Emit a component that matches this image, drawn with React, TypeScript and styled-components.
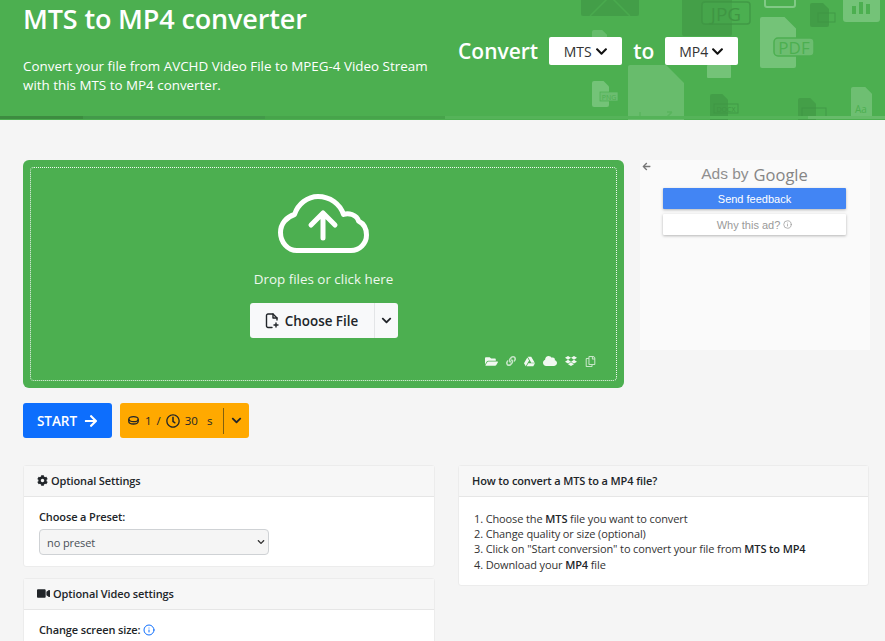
import React from "react";
import styled, { createGlobalStyle } from "styled-components";
import { FaArrowLeft, FaArrowRight, FaChevronDown, FaCloud, FaCog, FaDropbox, FaFolderOpen, FaGoogleDrive, FaLink, FaRegClock, FaRegCopy, FaVideo } from "react-icons/fa";
import { Info } from "lucide-react";

const Global = createGlobalStyle`
  html, body { margin: 0; padding: 0; height: 641px; overflow: hidden; background: #f5f5f5; }
  body { font-family: "Open Sans", "Noto Sans", sans-serif; color: #212529; }
  * { box-sizing: border-box; }
`;

const Page = styled.div`
  width: 885px;
  height: 641px;
  overflow: hidden;
`;

const Header = styled.header`
  position: relative;
  height: 120px;
  background: #4caf50;
  color: #fff;
  display: grid;
  grid-template-columns: 435px 1fr;
  padding-left: 23px;
  overflow: hidden;
`;

const Art = styled.svg`
  position: absolute;
  left: 0;
  top: 0;
  width: 885px;
  height: 120px;
`;

const Strip = styled.div`
  position: absolute;
  left: 0;
  right: 0;
  bottom: 1px;
  height: 3px;
  display: flex;
`;

const StripPart = styled.span<{ $w: number; $c: string }>`
  width: ${(p) => p.$w}px;
  background: ${(p) => p.$c};
`;

const Intro = styled.div`
  position: relative;
`;

const Title = styled.h1`
  margin: 0;
  font-size: 27px;
  letter-spacing: -0.15px;
  line-height: 37px;
  font-weight: 600;
`;

const Lead = styled.p`
  margin: 20px 0 0;
  font-size: 13.4px;
  line-height: 19px;
  width: 420px;
`;

const Convert = styled.div`
  position: relative;
  display: flex;
  align-items: center;
  height: 28px;
  margin-top: 37px;
  font-size: 21px;
  font-weight: 600;
`;

const ConvertWord = styled.span<{ $before?: number; $after: number }>`
  margin-left: ${(p) => p.$before ?? 0}px;
  margin-right: ${(p) => p.$after}px;
`;

const FormatButton = styled.div`
  width: 73px;
  height: 28px;
  background: #fff;
  border-radius: 2px;
  color: #333;
  display: flex;
  align-items: center;
  justify-content: center;
  gap: 3px;
  font-size: 14px;
  font-weight: 400;
  svg { color: #111; font-size: 13px; }
`;

const Main = styled.main`
  padding: 40px 15px 0 23px;
`;

const TopRow = styled.div`
  display: flex;
  align-items: flex-start;
  gap: 16px;
`;

const Uploader = styled.section`
  width: 601px;
  height: 228px;
  background: #4caf50;
  border-radius: 6px;
  padding: 7px;
`;

const DropZone = styled.div`
  position: relative;
  height: 100%;
  border: 1px dotted #f0f8f0;
  border-radius: 4px;
  display: flex;
  flex-direction: column;
  align-items: center;
  color: #fff;
  padding-top: 26px;
`;

const DropText = styled.div`
  margin-top: 15px;
  font-size: 13.4px;
  line-height: 20px;
  color: #eef8ee;
`;

const ChooseGroup = styled.div`
  margin-top: 14px;
  display: flex;
  height: 35px;
  width: 148px;
  background: #f8f9fa;
  border-radius: 3px;
  color: #212529;
`;

const ChooseMain = styled.div`
  flex: 1;
  display: flex;
  align-items: center;
  justify-content: center;
  gap: 6px;
  font-size: 13.4px;
  font-weight: 600;
  border-right: 1px solid #e3e5e7;
`;

const ChooseCaret = styled.div`
  width: 23px;
  display: flex;
  align-items: center;
  justify-content: center;
  font-size: 11px;
`;

const Sources = styled.div`
  position: absolute;
  right: 20px;
  bottom: 12px;
  display: flex;
  align-items: center;
  gap: 8px;
  color: #f1f8f1;
`;

const SourceIcon = styled.span<{ $faint?: boolean }>`
  display: flex;
  opacity: ${(p) => (p.$faint ? 0.75 : 1)};
`;

const AdPanel = styled.aside`
  position: relative;
  width: 230px;
  height: 190px;
  background: #fafafa;
  font-family: "Liberation Sans", Arial, sans-serif;
  display: flex;
  flex-direction: column;
  align-items: center;
  padding-right: 1px;
`;

const AdBack = styled.div`
  position: absolute;
  left: 2px;
  top: 2px;
  display: flex;
  color: #777;
`;

const AdTitle = styled.div`
  height: 28px;
  display: flex;
  align-items: center;
  gap: 5px;
  font-size: 15.5px;
  color: #8f8f8f;
`;

const AdGoogle = styled.span`
  font-size: 16.5px;
  font-weight: 500;
  color: #858585;
  font-family: "Open Sans", sans-serif;
`;

const AdButton = styled.div<{ $primary?: boolean }>`
  width: 183px;
  height: 21px;
  margin-bottom: 5px;
  display: flex;
  align-items: center;
  justify-content: center;
  gap: 3px;
  font-size: 11px;
  border-radius: 1px;
  color: ${(p) => (p.$primary ? "#fff" : "#9a9a9a")};
  background: ${(p) => (p.$primary ? "#4285f4" : "#fff")};
  box-shadow: 0 1px 3px rgba(0, 0, 0, 0.28);
`;

const Actions = styled.div`
  margin-top: 15px;
  display: flex;
  gap: 8px;
`;

const StartButton = styled.div`
  width: 89px;
  height: 35px;
  border-radius: 3px;
  background: #0d6efd;
  color: #fff;
  font-weight: 600;
  font-size: 13.5px;
  display: flex;
  align-items: center;
  justify-content: center;
  gap: 7px;
`;

const CostButton = styled.div`
  width: 129px;
  height: 35px;
  border-radius: 3px;
  background: #ffa900;
  color: #212529;
  font-size: 11.5px;
  font-weight: 500;
  display: flex;
  align-items: center;
  padding-left: 8px;
`;

const CostPart = styled.span<{ $ml?: number }>`
  margin-left: ${(p) => p.$ml ?? 0}px;
  display: flex;
  align-items: center;
`;

const CostCaret = styled.span`
  margin-left: auto;
  width: 26px;
  height: 26px;
  border-left: 1px solid #80600f;
  display: flex;
  align-items: center;
  justify-content: center;
  font-size: 11px;
`;

const Columns = styled.div`
  margin-top: 27px;
  display: grid;
  grid-template-columns: 412px 411px;
  gap: 23px;
  align-items: start;
`;

const Stack = styled.div`
  display: flex;
  flex-direction: column;
  gap: 11px;
`;

const Card = styled.section`
  background: #fff;
  border: 1px solid #ececec;
  border-radius: 3px;
`;

const CardHead = styled.h2`
  margin: 0;
  height: 31px;
  padding: 0 13px 2px;
  display: flex;
  align-items: center;
  gap: 3px;
  background: #f7f7f7;
  border-bottom: 1px solid #e6e6e6;
  font-size: 11px;
  letter-spacing: -0.12px;
  font-weight: 600;
  color: #212529;
`;

const CardBody = styled.div`
  padding: 12px 15px 11px;
`;

const FieldLabel = styled.label`
  display: flex;
  align-items: center;
  gap: 3px;
  font-size: 11px;
  letter-spacing: -0.12px;
  line-height: 16px;
  font-weight: 600;
  color: #212529;
  svg { color: #0d6efd; }
`;

const SelectWrap = styled.div`
  position: relative;
  margin-top: 4px;
  width: 230px;
  svg { position: absolute; right: 4px; top: 9px; color: #333; pointer-events: none; }
`;

const Select = styled.select`
  display: block;
  appearance: none;
  width: 100%;
  height: 26px;
  padding: 0 7px;
  border: 1px solid #cfd2d5;
  border-radius: 4px;
  background: #f5f5f5;
  color: #495057;
  font-family: inherit;
  font-size: 11px;
  letter-spacing: -0.1px;
`;

const Steps = styled.ol`
  margin: 0;
  padding: 14px 0 13px 15px;
  list-style-position: inside;
  font-size: 11px;
  letter-spacing: -0.12px;
  line-height: 15.2px;
  color: #333;
  b { font-weight: 600; color: #212529; }
`;

const FileShape = ({ x, y, w, h, fill, op }: { x: number; y: number; w: number; h: number; fill: string; op: number }) => {
  const c = w * 0.32;
  return (
    <path
      d={`M${x + 2} ${y}H${x + w - c}L${x + w} ${y + c}V${y + h - 2}Q${x + w} ${y + h} ${x + w - 2} ${y + h}H${x + 2}Q${x} ${y + h} ${x} ${y + h - 2}V${y + 2}Q${x} ${y} ${x + 2} ${y}Z`}
      fill={fill}
      opacity={op}
    />
  );
};

const LIGHT = "#8fd093";
const DARK = "#3f9543";

const HeaderArt = () => (
  <Art viewBox="0 0 885 120" aria-hidden="true">
    <rect x="581" y="-12" width="58" height="28" rx="2" fill={DARK} opacity="0.65" />
    <path d="M590 16 L610 -4 L630 16" stroke="#4caf50" strokeWidth="1.5" fill="none" opacity="0.7" />
    <FileShape x={682} y={-20} w={50} h={56} fill={DARK} op={0.6} />
    <rect x="702" y="2" width="48" height="22" rx="3" fill="#4caf50" fillOpacity="0.4" stroke={DARK} strokeOpacity="0.8" strokeWidth="1.5" />
    <text x="726" y="21" textAnchor="middle" fontSize="19" fill={DARK} fontFamily="Open Sans">JPG</text>
    <rect x="765" y="-10" width="30" height="17" rx="2" fill="none" stroke={LIGHT} strokeWidth="2" opacity="0.8" />
    <FileShape x={810} y={3} w={19} h={24} fill={DARK} op={0.7} />
    <rect x="818" y="13" width="17" height="9" fill="none" stroke={DARK} strokeOpacity="0.8" />
    <rect x="843" y="-8" width="37" height="30" rx="3" fill={LIGHT} opacity="0.6" />
    <rect x="852" y="6" width="4" height="8" fill="#4caf50" />
    <rect x="859" y="2" width="4" height="12" fill="#4caf50" />
    <rect x="866" y="4" width="4" height="10" fill="#4caf50" />
    <FileShape x={760} y={17} w={36} h={51} fill={LIGHT} op={0.6} />
    <rect x="774" y="38" width="40" height="18" rx="4" fill="#6cbd70" stroke="#4caf50" strokeWidth="1.5" />
    <text x="794" y="53.500" textAnchor="middle" fontSize="17" fill="#4caf50" fontFamily="Open Sans">PDF</text>
    <rect x="707" y="65" width="24" height="13" rx="1" fill={LIGHT} opacity="0.6" />
    <FileShape x={628} y={65} w={56} h={60} fill={LIGHT} op={0.42} />
    <path d="M640 118v-6M672 112l-5 5M672 112h-5" stroke="#4caf50" strokeWidth="1.5" opacity="0.5" />
    <FileShape x={592} y={81} w={17} h={26} fill={LIGHT} op={0.6} />
    <rect x="600" y="92" width="18" height="9" fill="#6cbd70" stroke="#4caf50" strokeWidth="0.7" />
    <text x="609" y="100" textAnchor="middle" fontSize="7" fill="#4caf50" fontFamily="Open Sans">PNG</text>
    <FileShape x={592} y={30} w={15} h={9} fill={LIGHT} op={0.4} />
    <FileShape x={710} y={94} w={18} h={28} fill={DARK} op={0.65} />
    <rect x="714" y="104" width="24" height="9" fill="none" stroke={DARK} strokeOpacity="0.8" />
    <text x="726" y="112" textAnchor="middle" fontSize="7" fill={DARK} fontFamily="Open Sans">DOCX</text>
    <FileShape x={798} y={98} w={18} h={26} fill={DARK} op={0.6} />
    <rect x="802" y="108" width="24" height="9" fill="none" stroke={DARK} strokeOpacity="0.8" />
    <FileShape x={851} y={87} w={21} h={31} fill={LIGHT} op={0.5} />
    <text x="861" y="113" textAnchor="middle" fontSize="10" fill="#4caf50" fontFamily="Open Sans">Aa</text>
  </Art>
);

const CloudUpload = () => (
  <svg width="92" height="60" viewBox="0 0 92 60" fill="none" stroke="#fff" strokeLinecap="round" strokeLinejoin="round">
    <path strokeWidth="5" d="M19 56.500C9.500 56.500 2.500 48 2.500 38.500C2.500 29.500 8.500 23 16.500 20.500C20 10 29.500 2.500 40 2.500C52 2.500 62 10 65.500 20.500C68 19.500 71 19.500 74 20.500C78 22 80 25 80.500 27C85.500 29.500 88.500 35 88.500 41C88.500 49.500 81.500 56.500 73 56.500Z" />
    <path strokeWidth="5" d="M45 44V19M33 31L45 19L57 31" />
  </svg>
);

const FilePlusIcon = () => (
  <svg width="14" height="16" viewBox="0 0 14 16" fill="none" stroke="#212529" strokeWidth="1.400" strokeLinecap="round" strokeLinejoin="round">
    <path d="M7 14.500H3A1.500 1.500 0 0 1 1.500 13V2.500A1.500 1.500 0 0 1 3 1H8L12 5V7" />
    <path d="M8 1V5H12M11 10V14M9 12H13" />
  </svg>
);

const Coin = () => (
  <svg width="11" height="9" viewBox="0 0 11 9" fill="none" stroke="#212529" strokeWidth="1.300">
    <ellipse cx="5.500" cy="3.200" rx="4.700" ry="2.500" />
    <path d="M0.800 3.200V5.500C0.800 7 3 8 5.500 8S10.200 7 10.200 5.500V3.200" />
  </svg>
);

export default function App() {
  return (
    <Page>
      <Global />
      <Header>
        <HeaderArt />
        <Strip>
          <StripPart $w={83} $c="#3d8c40" />
          <StripPart $w={182} $c="#43994a" />
          <StripPart $w={180} $c="#47a44b" />
          <StripPart $w={363} $c="#55b359" />
          <StripPart $w={77} $c="#67bb6a" />
        </Strip>
        <Intro>
          <Title>MTS to MP4 converter</Title>
          <Lead>Convert your file from AVCHD Video File to MPEG-4 Video Stream with this MTS to MP4 converter.</Lead>
        </Intro>
        <Convert>
          <ConvertWord $after={11}>Convert</ConvertWord>
          <FormatButton>MTS <FaChevronDown /></FormatButton>
          <ConvertWord $before={11} $after={11}>to</ConvertWord>
          <FormatButton>MP4 <FaChevronDown /></FormatButton>
        </Convert>
      </Header>
      <Main>
        <TopRow>
          <Uploader>
            <DropZone>
              <CloudUpload />
              <DropText>Drop files or click here</DropText>
              <ChooseGroup>
                <ChooseMain><FilePlusIcon />Choose File</ChooseMain>
                <ChooseCaret><FaChevronDown /></ChooseCaret>
              </ChooseGroup>
              <Sources>
                <SourceIcon><FaFolderOpen size={13} /></SourceIcon>
                <SourceIcon $faint><FaLink size={10} /></SourceIcon>
                <SourceIcon><FaGoogleDrive size={11} /></SourceIcon>
                <SourceIcon><FaCloud size={14} /></SourceIcon>
                <SourceIcon><FaDropbox size={12} /></SourceIcon>
                <SourceIcon $faint><FaRegCopy size={11} /></SourceIcon>
              </Sources>
            </DropZone>
          </Uploader>
          <AdPanel>
            <AdBack><FaArrowLeft size={9} /></AdBack>
            <AdTitle>Ads by <AdGoogle>Google</AdGoogle></AdTitle>
            <AdButton $primary>Send feedback</AdButton>
            <AdButton>Why this ad? <Info size={9} /></AdButton>
          </AdPanel>
        </TopRow>
        <Actions>
          <StartButton>START <FaArrowRight size={14} /></StartButton>
          <CostButton>
            <Coin />
            <CostPart $ml={6}>1</CostPart>
            <CostPart $ml={5}>/</CostPart>
            <CostPart $ml={5}><FaRegClock size={14} /></CostPart>
            <CostPart $ml={5}>30</CostPart>
            <CostPart $ml={9}>s</CostPart>
            <CostCaret><FaChevronDown /></CostCaret>
          </CostButton>
        </Actions>
        <Columns>
          <Stack>
            <Card>
              <CardHead><FaCog size={11} /> Optional Settings</CardHead>
              <CardBody>
                <FieldLabel>Choose a Preset:</FieldLabel>
                <SelectWrap>
                  <Select defaultValue="no preset"><option>no preset</option></Select>
                  <FaChevronDown size={8} />
                </SelectWrap>
              </CardBody>
            </Card>
            <Card>
              <CardHead><FaVideo size={13} /> Optional Video settings</CardHead>
              <CardBody>
                <FieldLabel>Change screen size: <Info size={12} /></FieldLabel>
              </CardBody>
            </Card>
          </Stack>
          <Card>
            <CardHead>How to convert a MTS to a MP4 file?</CardHead>
            <Steps>
              <li>Choose the <b>MTS</b> file you want to convert</li>
              <li>Change quality or size (optional)</li>
              <li>Click on "Start conversion" to convert your file from <b>MTS to MP4</b></li>
              <li>Download your <b>MP4</b> file</li>
            </Steps>
          </Card>
        </Columns>
      </Main>
    </Page>
  );
}
